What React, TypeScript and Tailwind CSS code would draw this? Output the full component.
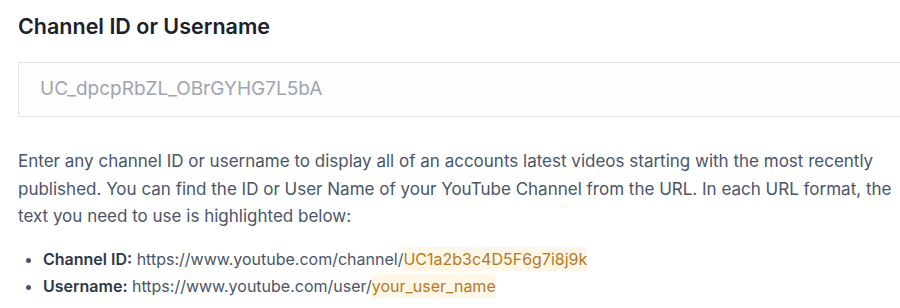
export default function App() {
  return (
    <div
      className="h-[308px] w-[900px] overflow-hidden bg-white pl-[18px] pt-[12px]"
      style={{ fontFamily: "Inter, 'Noto Sans', sans-serif" }}
    >
      <h2 className="text-[21.5px] font-semibold leading-7 text-[#1a202c]">
        Channel ID or Username
      </h2>
      <div className="mt-[22px] flex h-[55px] w-[1000px] items-center border border-[#e2e4e8] bg-[#fdfdfd] pl-[21px]">
        <span className="text-[19px] text-[#a0a5ad]">UC_dpcpRbZL_OBrGYHG7L5bA</span>
      </div>
      <p className="mt-[31px] w-[880px] text-[17px] leading-[27.5px] text-[#4a5568]">
        Enter any channel ID or username to display all of an accounts latest videos starting with
        the most recently published. You can find the ID or User Name of your YouTube Channel from
        the URL. In each URL format, the text you need to use is highlighted below:
      </p>
      <ul className="mt-[15px] list-disc pl-[25px] text-[16px] leading-[27px] text-[#4a5568]">
        <li>
          <span className="font-semibold text-[#2d3748]">Channel ID:</span>{" "}
          https://www.youtube.com/channel/
          <span className="bg-[#fef6e6] py-[2px] text-[#b7791f]">UC1a2b3c4D5F6g7i8j9k</span>
        </li>
        <li>
          <span className="font-semibold text-[#2d3748]">Username:</span>{" "}
          https://www.youtube.com/user/
          <span className="bg-[#fef6e6] py-[2px] text-[#b7791f]">your_user_name</span>
        </li>
      </ul>
    </div>
  );
}
